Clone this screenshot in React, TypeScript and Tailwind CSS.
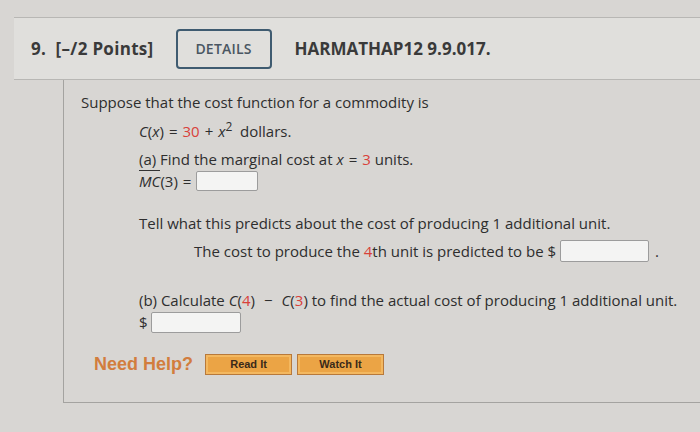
import React from "react";

const Box = ({ w, h }: { w: string; h: string }) => (
  <span className={`inline-block ${w} ${h} bg-[#f4f4f3] border border-[#9c9c9c] rounded-[2px] align-middle`} />
);

const Op = ({ c }: { c: string }) => <span className="mx-[5px]">{c}</span>;

export default function App() {
  return (
    <div
      className="w-[700px] h-[432px] overflow-hidden bg-[#d8d6d3] text-[#2e2e2e] pt-[17px]"
      style={{ fontFamily: '"Open Sans", "Liberation Sans", sans-serif' }}
    >
      <div className="ml-[14px] h-[63px] border-t border-b border-[#b8b7b4] bg-[#e0dfdc] flex items-center">
        <div className="pl-[17px] text-[17px] font-bold text-[#3a3a3a] tracking-[0.3px]">9.&nbsp; [–/2 Points]</div>
        <div className="ml-[22px] w-[96px] h-[40px] border-2 border-[#3f5b70] rounded-[4px] flex items-center justify-center text-[14px] text-[#4a5662] font-semibold tracking-[0.2px]">
          DETAILS
        </div>
        <div className="ml-[23px] text-[17px] font-bold text-[#3a3a3a]">HARMATHAP12 9.9.017.</div>
      </div>
      <div className="ml-[63px] h-[323px] border-l border-b border-[#a4a3a0] pl-[17px] pt-[11px] text-[15px] leading-[22px]">
        <div>Suppose that the cost function for a commodity is</div>
        <div className="pl-[58px] mt-[7px]">
          <div>
            <i>C</i>(<i>x</i>)<Op c="=" />
            <span className="text-[#d9413a]">30</span>
            <Op c="+" />
            <i>x</i>
            <sup className="text-[12px]">2</sup>&nbsp;&nbsp;dollars.
          </div>
          <div className="mt-[6px]">
            (a) Find the marginal cost at <i>x</i>
            <Op c="=" />
            <span className="text-[#d9413a]">3</span> units.
          </div>
          <div className="flex items-center">
            <span>
              <span className="border-t border-[#333]"><i>MC</i></span>(3)<Op c="=" />
            </span>
            <Box w="w-[62px]" h="h-[20px]" />
          </div>
          <div className="mt-[20px]">Tell what this predicts about the cost of producing 1 additional unit.</div>
          <div className="pl-[55px] mt-[6px] flex items-center">
            <span>
              The cost to produce the <span className="text-[#d9413a]">4</span>th unit is predicted to be $&nbsp;
            </span>
            <Box w="w-[89px]" h="h-[22px]" />
            <span className="ml-[6px]">.</span>
          </div>
          <div className="mt-[27px]">
            (b) Calculate <i>C</i>(<span className="text-[#d9413a]">4</span>)<span className="mx-[9px]">−</span>
            <i>C</i>(<span className="text-[#d9413a]">3</span>)&nbsp;to find the actual cost of producing 1 additional unit.
          </div>
          <div className="flex items-center">
            <span>$&nbsp;</span>
            <Box w="w-[90px]" h="h-[21px]" />
          </div>
        </div>
        <div className="ml-[13px] mt-[20px] flex items-center">
          <span
            className="text-[18px] font-bold text-[#d27d3e]"
            style={{ fontFamily: '"Liberation Sans", Arial, sans-serif' }}
          >
            Need Help?
          </span>
          <div
            className="ml-[12px] w-[87px] h-[21px] bg-[#eba445] border border-[#b8793a] shadow-[inset_0_0_0_2px_#f3b860] flex items-center justify-center text-[11px] font-bold text-[#3a2a1a]"
            style={{ fontFamily: '"Liberation Sans", Arial, sans-serif' }}
          >
            Read It
          </div>
          <div
            className="ml-[5px] w-[87px] h-[21px] bg-[#eba445] border border-[#b8793a] shadow-[inset_0_0_0_2px_#f3b860] flex items-center justify-center text-[11px] font-bold text-[#3a2a1a]"
            style={{ fontFamily: '"Liberation Sans", Arial, sans-serif' }}
          >
            Watch It
          </div>
        </div>
      </div>
    </div>
  );
}
